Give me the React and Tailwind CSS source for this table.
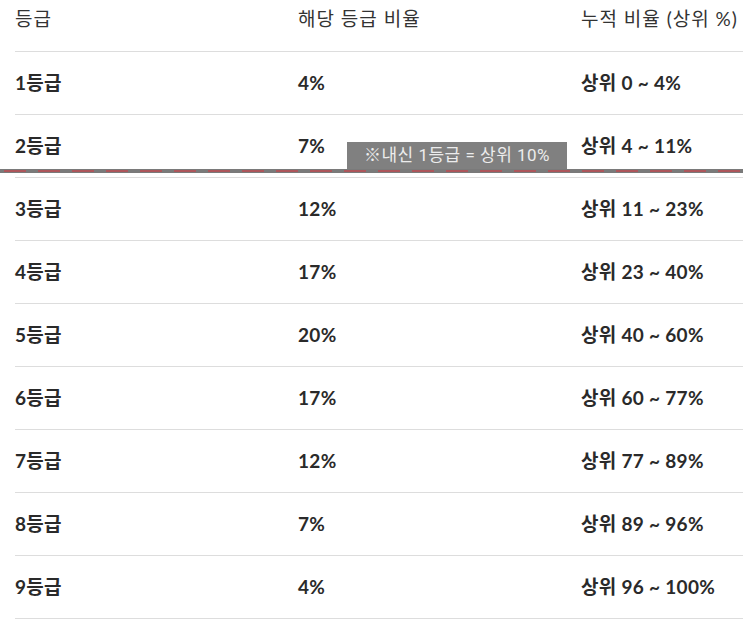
const rows = [
  ['1등급', '4%', '상위 0 ~ 4%'],
  ['2등급', '7%', '상위 4 ~ 11%'],
  ['3등급', '12%', '상위 11 ~ 23%'],
  ['4등급', '17%', '상위 23 ~ 40%'],
  ['5등급', '20%', '상위 40 ~ 60%'],
  ['6등급', '17%', '상위 60 ~ 77%'],
  ['7등급', '12%', '상위 77 ~ 89%'],
  ['8등급', '7%', '상위 89 ~ 96%'],
  ['9등급', '4%', '상위 96 ~ 100%'],
];

const font = { fontFamily: 'Lato, "Noto Sans CJK KR", sans-serif' };

export default function App() {
  return (
    <div className="relative w-[743px] h-[622px] bg-white overflow-hidden" style={font}>
      <div className="pl-[15px]">
        {/* Header */}
        <div className="grid grid-cols-[283px_283px_1fr] h-[52px] pb-[12px] items-center border-b border-[#dddddd] text-[19px] tracking-[1px] text-[#333333]">
          <div>등급</div>
          <div>해당 등급 비율</div>
          <div>누적 비율 (상위 %)</div>
        </div>

        {/* Rows */}
        {rows.map((r) => (
          <div
            key={r[0]}
            className="grid grid-cols-[283px_283px_1fr] h-[63px] items-center border-b border-[#dddddd] text-[19px] tracking-[0.3px] font-bold text-[#2a2a2a]"
          >
            <div>{r[0]}</div>
            <div>{r[1]}</div>
            <div>{r[2]}</div>
          </div>
        ))}
      </div>

      {/* 1등급 cut line overlay */}
      <div className="absolute left-0 right-0 top-[169px] h-[4px] bg-[#7a7a7a]">
        <svg width="743" height="4" className="block">
          <line x1="4" y1="2" x2="743" y2="2" stroke="#e0323c" strokeWidth="1" strokeDasharray="22 12" />
        </svg>
      </div>
      <div
        className="absolute left-[347px] top-[142px] w-[220px] h-[27px] bg-[#808080] text-[#ececec] text-[17px] tracking-[0.5px] flex items-center justify-center"
        style={{ fontFamily: 'Roboto, "Noto Sans CJK KR", sans-serif' }}
      >
        ※내신 1등급 = 상위 10%
      </div>
    </div>
  );
}
